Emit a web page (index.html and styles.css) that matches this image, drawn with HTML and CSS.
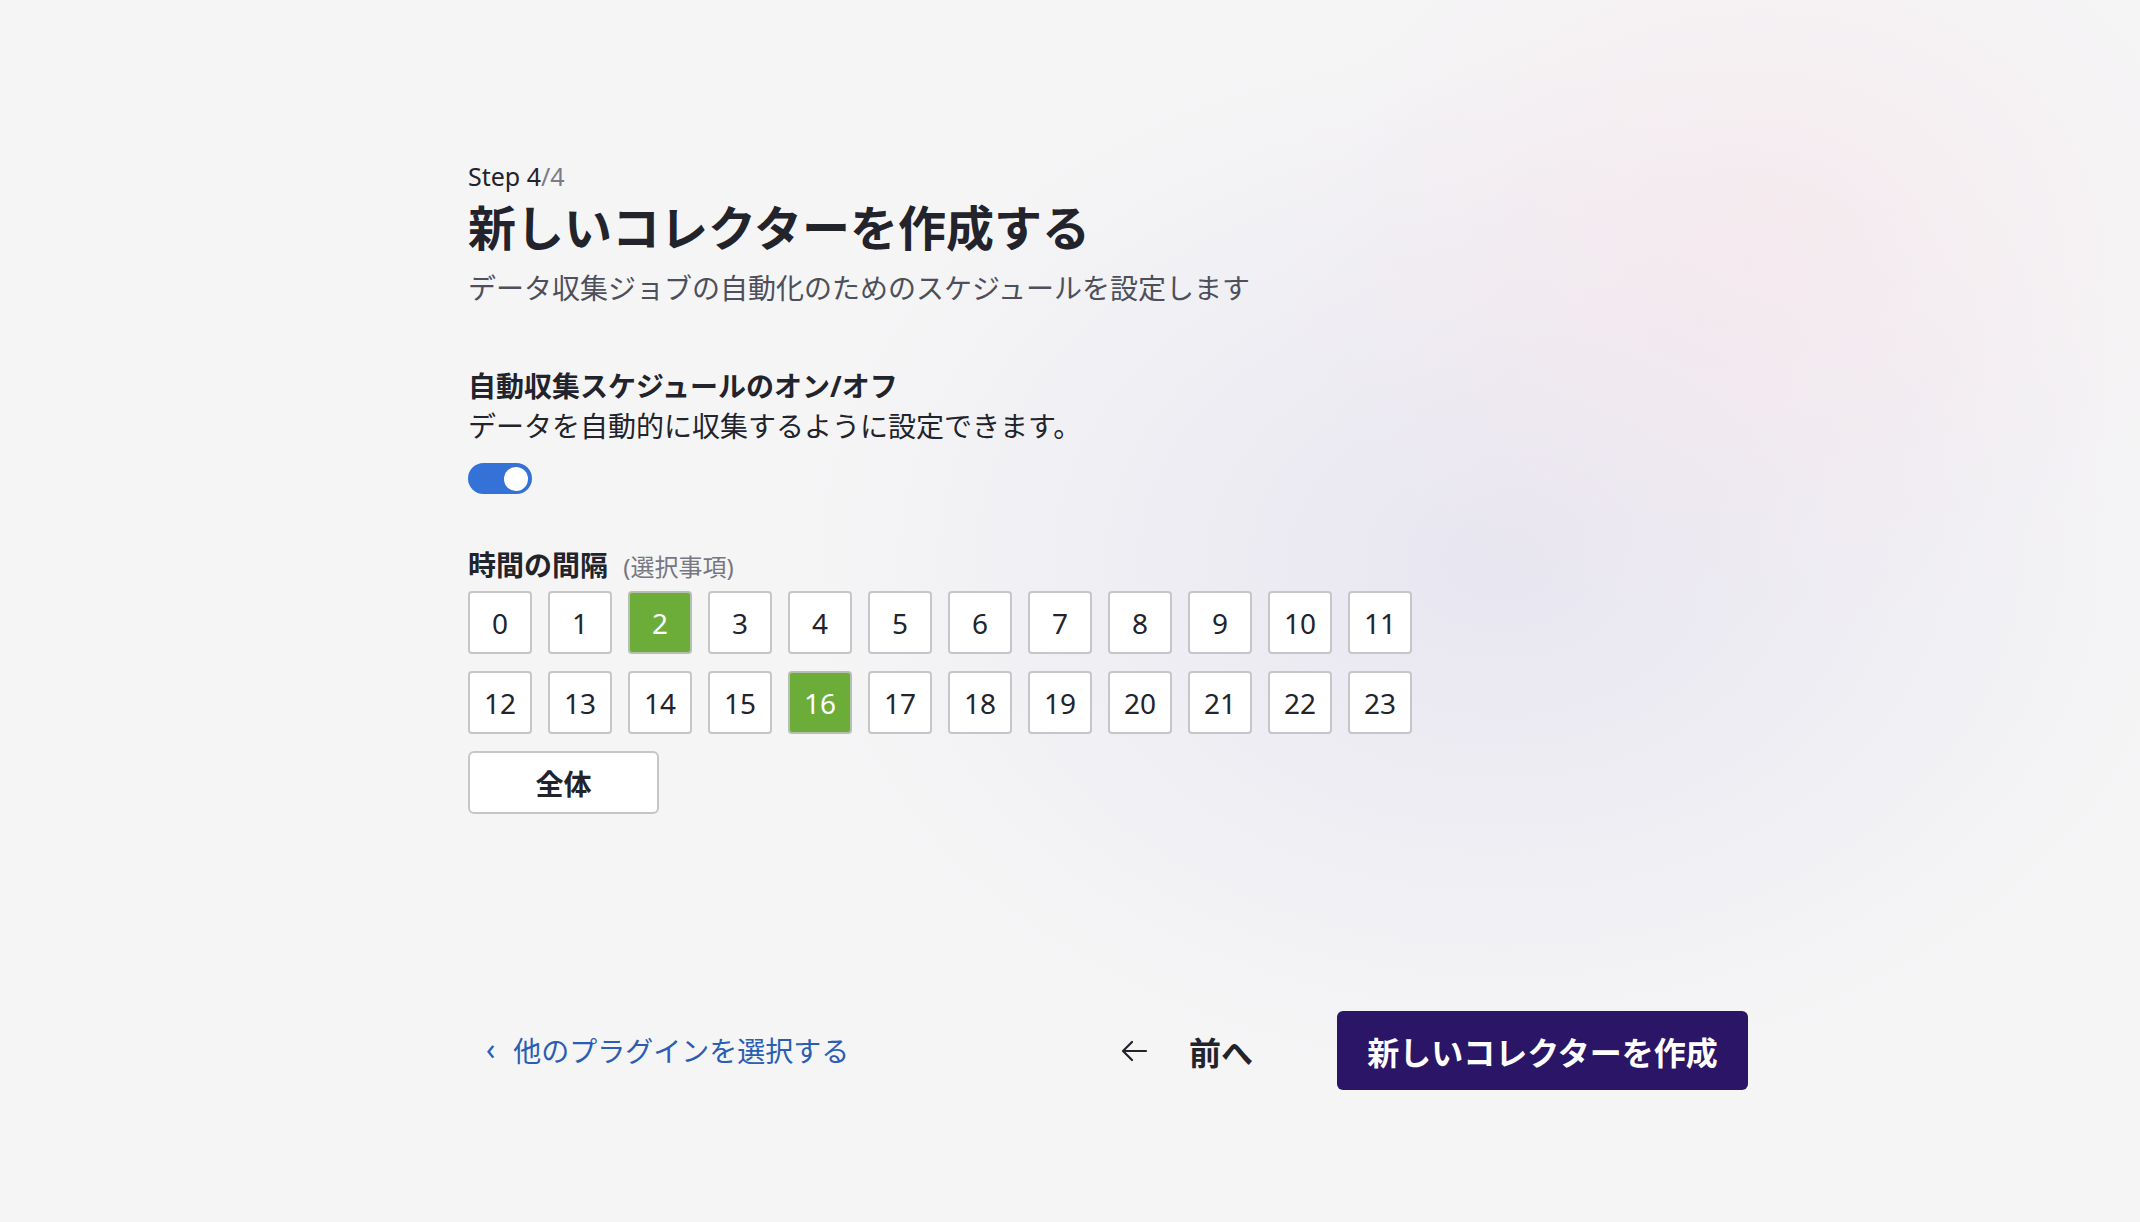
FILE: index.html
```html
<!DOCTYPE html>
<html lang="ja">
<head>
<meta charset="utf-8">
<title>新しいコレクターを作成する</title>
<link rel="stylesheet" href="styles.css">
</head>
<body>
<div class="page">
  <main class="content">
    <div class="step">Step 4<span class="step-total">/4</span></div>
    <h1 class="title">新しいコレクターを作成する</h1>
    <p class="subtitle">データ収集ジョブの自動化のためのスケジュールを設定します</p>

    <section class="section-toggle">
      <h2 class="section-title">自動収集スケジュールのオン/オフ</h2>
      <p class="section-desc">データを自動的に収集するように設定できます。</p>
      <div class="toggle"><span class="knob"></span></div>
    </section>

    <section class="section-hours">
      <h2 class="section-title">時間の間隔 <span class="optional">(選択事項)</span></h2>
      <div class="hours">
        <button class="hour">0</button><button class="hour">1</button><button class="hour selected">2</button><button class="hour">3</button><button class="hour">4</button><button class="hour">5</button><button class="hour">6</button><button class="hour">7</button><button class="hour">8</button><button class="hour">9</button><button class="hour">10</button><button class="hour">11</button>
        <button class="hour">12</button><button class="hour">13</button><button class="hour">14</button><button class="hour">15</button><button class="hour selected">16</button><button class="hour">17</button><button class="hour">18</button><button class="hour">19</button><button class="hour">20</button><button class="hour">21</button><button class="hour">22</button><button class="hour">23</button>
      </div>
      <button class="all-btn">全体</button>
    </section>
  </main>

  <footer class="footer">
    <a class="back-link" href="#"><span class="chev">‹</span>他のプラグインを選択する</a>
    <div class="actions">
      <a class="prev" href="#"><svg class="arrow" width="28" height="24" viewBox="0 0 28 24"><path d="M26 12H3M12 3L3 12l9 9" fill="none" stroke="#22232b" stroke-width="2.2" stroke-linecap="round" stroke-linejoin="round"/></svg><span>前へ</span></a>
      <button class="create-btn">新しいコレクターを作成</button>
    </div>
  </footer>
</div>
</body>
</html>
```

FILE: styles.css
```css
* { box-sizing: border-box; }
html, body {
  margin: 0;
  padding: 0;
  height: 100%;
}
body {
  font-family: "Noto Sans", "Noto Sans CJK JP", sans-serif;
  color: #22232b;
  background-color: #f5f5f6;
  background-image:
    radial-gradient(ellipse 480px 380px at 1760px 250px, rgba(246, 228, 234, 0.6), rgba(246, 228, 234, 0) 100%),
    radial-gradient(ellipse 700px 520px at 1500px 560px, rgba(230, 228, 240, 0.9), rgba(230, 228, 240, 0) 100%);
  background-repeat: no-repeat;
}
.page {
  width: 2140px;
  height: 1222px;
  padding: 160px 0 0 468px;
  display: flex;
  flex-direction: column;
}
.content {
  display: flex;
  flex-direction: column;
  align-items: flex-start;
}
.step {
  font-size: 25px;
  line-height: 32px;
  color: #22232b;
}
.step-total { color: #7b7c86; }
.title {
  margin: 6px 0 0;
  font-size: 48px;
  line-height: 60px;
  font-weight: 700;
  letter-spacing: 0;
}
.subtitle {
  margin: 10px 0 0;
  font-size: 28px;
  line-height: 40px;
  color: #4d4f5b;
}
.section-toggle {
  margin-top: 58px;
  display: flex;
  flex-direction: column;
  align-items: flex-start;
}
.section-title {
  margin: 0;
  font-size: 28px;
  line-height: 40px;
  font-weight: 700;
}
.section-desc {
  margin: 0;
  font-size: 28px;
  line-height: 40px;
}
.toggle {
  margin-top: 17px;
  width: 64px;
  height: 31px;
  border-radius: 16px;
  background: #3572d8;
  display: flex;
  align-items: center;
  justify-content: flex-end;
  padding-right: 4px;
}
.knob {
  width: 24px;
  height: 24px;
  border-radius: 50%;
  background: #ffffff;
}
.section-hours {
  margin-top: 51px;
  display: flex;
  flex-direction: column;
  align-items: flex-start;
}
.optional {
  font-size: 24px;
  font-weight: 400;
  color: #76777f;
  margin-left: 8px;
}
.hours {
  margin-top: 4px;
  display: grid;
  grid-template-columns: repeat(12, 64px);
  grid-auto-rows: 63px;
  column-gap: 16px;
  row-gap: 17px;
}
.hour, .all-btn {
  font-family: "Noto Sans", "Noto Sans CJK JP", sans-serif;
  background: #ffffff;
  border: 2px solid #c6c6ca;
  border-radius: 4px;
  color: #22232b;
  font-size: 28px;
  padding: 0;
  display: flex;
  align-items: center;
  justify-content: center;
}
.hour.selected {
  background: #6cad3a;
  color: #ffffff;
  border-color: #b7c0b0;
}
.all-btn {
  margin-top: 17px;
  width: 191px;
  height: 63px;
  font-weight: 700;
  border-radius: 6px;
}
.footer {
  margin-top: 197px;
  width: 1280px;
  display: flex;
  align-items: center;
  justify-content: space-between;
}
.back-link {
  display: flex;
  align-items: center;
  color: #2a5db3;
  text-decoration: none;
  font-size: 28px;
  line-height: 40px;
  padding-left: 18px;
}
.chev {
  font-size: 30px;
  margin-right: 18px;
  line-height: 40px;
  position: relative;
  top: -2px;
}
.actions {
  display: flex;
  align-items: center;
}
.prev {
  display: flex;
  align-items: center;
  text-decoration: none;
  color: #22232b;
  font-size: 32px;
  font-weight: 700;
  margin-right: 84px;
}
.arrow { margin-right: 41px; }
.create-btn {
  font-family: "Noto Sans", "Noto Sans CJK JP", sans-serif;
  width: 411px;
  height: 79px;
  border: none;
  border-radius: 6px;
  background: #2a1566;
  color: #ffffff;
  font-size: 32px;
  font-weight: 700;
  padding: 0;
}
```
